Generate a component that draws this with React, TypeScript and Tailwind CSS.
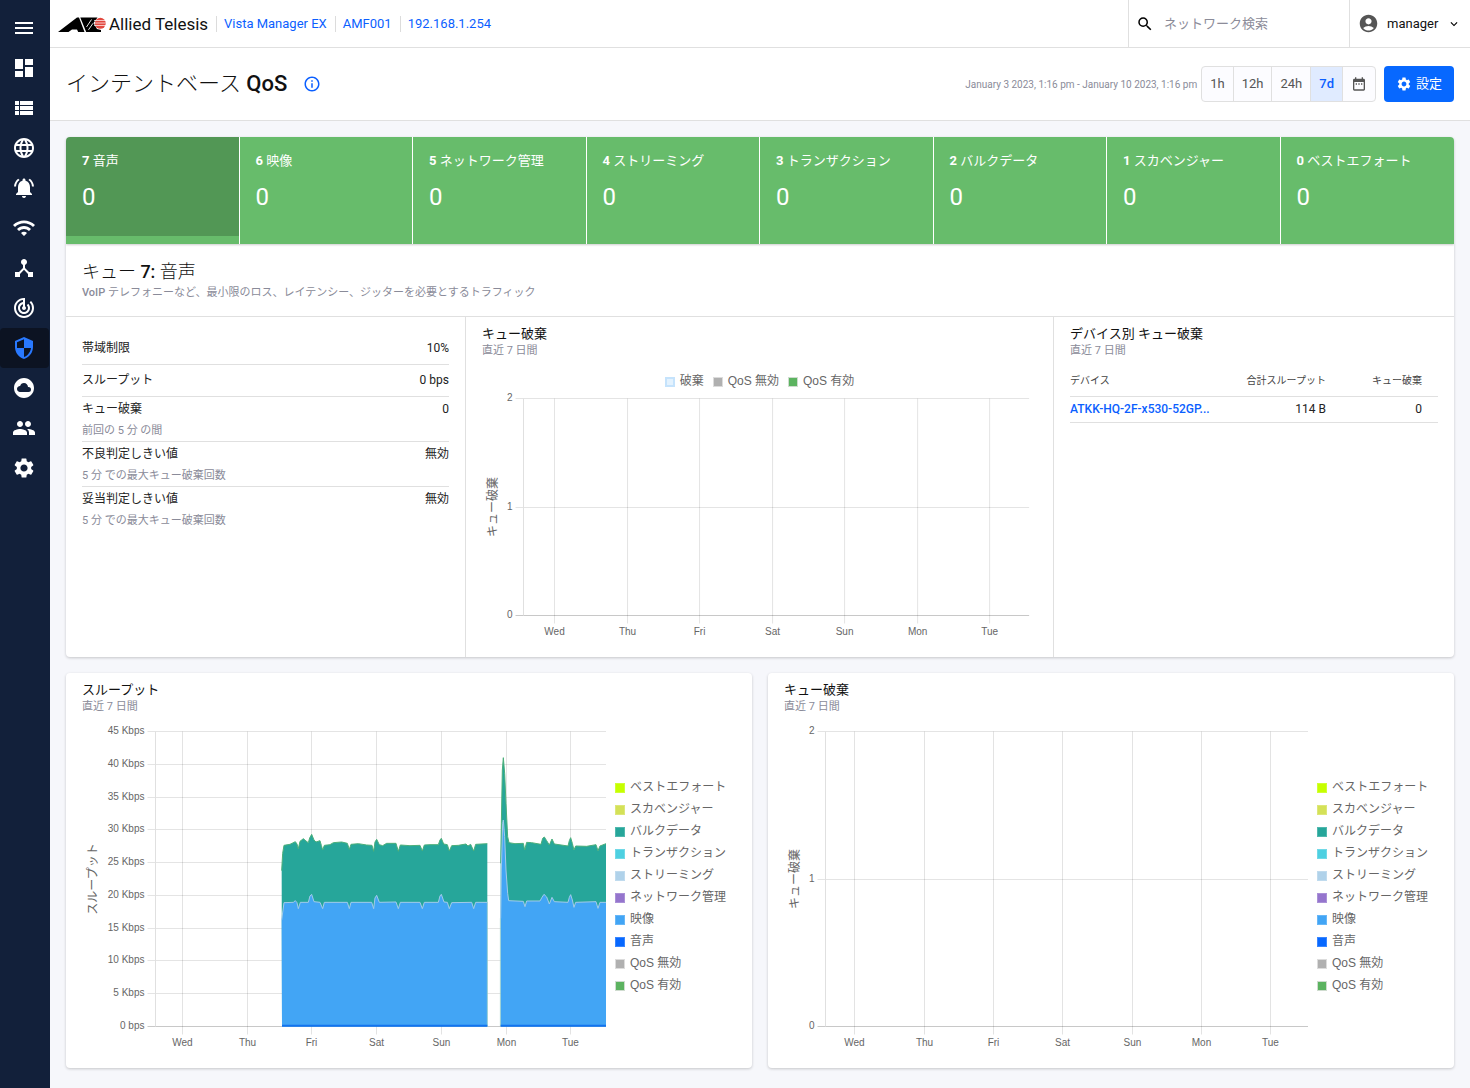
import React from "react";
import {
  MdAccountCircle,
  MdCloudCircle,
  MdDashboard,
  MdDateRange,
  MdDeviceHub,
  MdExpandMore,
  MdInfoOutline,
  MdLanguage,
  MdMenu,
  MdNotificationsActive,
  MdPeople,
  MdSearch,
  MdSecurity,
  MdSettings,
  MdTrackChanges,
  MdViewList,
  MdWifi,
} from "react-icons/md";

const NAV = [
  { icon: MdMenu, label: "メニュー" },
  { icon: MdDashboard, label: "ダッシュボード" },
  { icon: MdViewList, label: "資産管理" },
  { icon: MdLanguage, label: "ネットワークマップ" },
  { icon: MdNotificationsActive, label: "イベント" },
  { icon: MdWifi, label: "無線" },
  { icon: MdDeviceHub, label: "SD-WAN" },
  { icon: MdTrackChanges, label: "トラフィック" },
  { icon: MdSecurity, label: "サービス", active: true },
  { icon: MdCloudCircle, label: "クラウド" },
  { icon: MdPeople, label: "ユーザー管理" },
  { icon: MdSettings, label: "システム管理" },
];

const QUEUES = [
  "7 音声",
  "6 映像",
  "5 ネットワーク管理",
  "4 ストリーミング",
  "3 トランザクション",
  "2 バルクデータ",
  "1 スカベンジャー",
  "0 ベストエフォート",
];

const STATS = [
  { label: "帯域制限", value: "10%" },
  { label: "スループット", value: "0 bps" },
  { label: "キュー破棄", value: "0", note: "前回の 5 分 の間" },
  { label: "不良判定しきい値", value: "無効", note: "5 分 での最大キュー破棄回数" },
  { label: "妥当判定しきい値", value: "無効", note: "5 分 での最大キュー破棄回数" },
];

const LEGEND = [
  { label: "ベストエフォート", swatch: "bg-[#c6ff00] border-[#d0ff33]" },
  { label: "スカベンジャー", swatch: "bg-[#d4e157] border-[#dde779]" },
  { label: "バルクデータ", swatch: "bg-[#26a69a] border-[#51b8ae]" },
  { label: "トランザクション", swatch: "bg-[#4dd0e1] border-[#71d9e7]" },
  { label: "ストリーミング", swatch: "bg-[#b0d2ea] border-[#c0dbee]" },
  { label: "ネットワーク管理", swatch: "bg-[#9575cd] border-[#aa91d7]" },
  { label: "映像", swatch: "bg-[#42a5f5] border-[#68b7f7]" },
  { label: "音声", swatch: "bg-[#0768ff] border-[#3986ff]" },
  { label: "QoS 無効", swatch: "bg-[#b0b0b0] border-[#dcdcdc]" },
  { label: "QoS 有効", swatch: "bg-[#5cb360] border-[#cfdccf]" },
];

const DAYS = ["Wed", "Thu", "Fri", "Sat", "Sun", "Mon", "Tue"];

// Top edges of the stacked areas, three units to one chart unit
const BULK_A =
  "35,392 38,340 42,316 60,313 76,305 81,312 85,326 90,304 100,296 108,303 115,308 119,294 125,283 132,300 138,306 150,302 154,316 158,330 163,316 180,314 190,308 215,306 232,310 238,328 243,313 265,311 290,315 306,316 311,334 315,306 320,298 328,314 338,317 350,310 378,310 385,334 391,315 420,317 450,316 457,333 463,315 480,314 505,314 510,300 514,295 521,312 532,314 538,333 545,317 565,316 588,312 594,318 602,313 611,333 617,313 652,311";
const VIDEO_A =
  "35,540 42,488 70,487 76,482 81,488 85,506 91,487 115,487 120,468 125,463 132,485 150,487 158,506 163,487 232,487 238,506 243,487 305,487 311,506 315,474 320,466 328,487 378,486 385,506 391,487 450,487 457,506 463,487 505,487 510,468 514,463 522,486 532,487 538,506 545,488 605,487 611,506 617,487 652,487";
const BULK_B =
  "692,370 694,250 697,90 700,53 704,100 708,190 713,290 717,308 735,311 760,310 764,330 770,307 785,308 813,313 818,295 823,291 830,302 838,315 846,297 853,312 894,318 898,302 902,293 907,310 912,330 917,318 950,319 978,314 984,332 990,318 1008,311";
const VIDEO_B =
  "692,535 694,390 698,250 700,240 704,290 708,390 713,460 716,482 760,484 765,500 770,483 810,483 816,472 822,463 830,471 838,492 846,472 853,485 894,487 898,472 902,464 907,480 912,502 917,487 978,485 984,505 990,487 1008,487";

function Logo() {
  return (
    <a href="#" aria-label="Allied Telesis" className="flex items-center">
      <svg width="150" height="22" viewBox="0 0 150 22">
        <path d="M0 19 19 4.500h2L26.500 19h-6.300l-1.200-2.600h-5L10.500 19z" fill="#000" />
        <path d="M22.300 4.500H39.500L35.500 10l3.500 6 4 1v2H28.200z" fill="#000" />
        <path d="M33.500 6.500 28.500 14M30.500 16.800l4.500-6.500" stroke="#fff" strokeWidth="0.900" />
        <circle cx="42.300" cy="10.300" r="5.500" fill="#e2483f" />
        <path d="M36 7.500h13M36 10h13M36 12.500h13" stroke="#fff" strokeWidth="0.700" />
        <text x="51" y="17" fontSize="17" fontFamily="Roboto" fill="#111">
          Allied Telesis
        </text>
      </svg>
    </a>
  );
}

function CardTitle({ title, note }: { title: string; note: string }) {
  return (
    <>
      <h3 className="text-[13px] leading-[17px] text-[#111]">{title}</h3>
      <p className="text-[11px] leading-[17px] text-[#8a8b99]">{note}</p>
    </>
  );
}

type ChartProps = {
  width: number;
  height: number;
  left: number;
  right: number;
  top: number;
  bottom: number;
  firstDay: number;
  dayStep: number;
  yTicks: string[];
  yLabel: string;
  children?: React.ReactNode;
};

function Chart({ width, height, left, right, top, bottom, firstDay, dayStep, yTicks, yLabel, children }: ChartProps) {
  const middle = (top + bottom) / 2;
  const rowStep = (bottom - top) / (yTicks.length - 1);

  return (
    <svg
      viewBox={`0 0 ${width} ${height}`}
      className="block h-auto w-full"
      fontFamily="Liberation Sans, Noto Sans CJK JP, sans-serif"
      fill="#666"
      role="img"
      aria-label={yLabel}
    >
      {yTicks.map((tick, i) => {
        const y = Math.round(top + rowStep * i - 0.5) + 0.5;
        const last = i === yTicks.length - 1;
        return (
          <g key={tick}>
            <line x1={left - 8} x2={right} y1={y} y2={y} stroke={last ? "#c8c8c8" : "#e4e4e4"} />
            <text x={left - 11} y={y + 2.5} fontSize="10" textAnchor="end">
              {tick}
            </text>
          </g>
        );
      })}
      <line x1={left} x2={left} y1={top} y2={bottom} stroke="#e0e0e0" />
      {DAYS.map((day, i) => {
        const x = Math.floor(firstDay + dayStep * i) + 0.5;
        return (
          <g key={day}>
            <line x1={x} x2={x} y1={top} y2={bottom + 8} stroke="#000" strokeOpacity="0.11" />
            <text x={x} y={bottom + 19.5} fontSize="10" textAnchor="middle">
              {day}
            </text>
          </g>
        );
      })}
      <text
        x={11}
        y={middle}
        fontSize="12"
        textAnchor="middle"
        dominantBaseline="central"
        transform={`rotate(-90 11 ${middle})`}
      >
        {yLabel}
      </text>
      {children}
    </svg>
  );
}

function Area({ points, from, to, fill, stroke }: { points: string; from: number; to: number; fill: string; stroke: string }) {
  return (
    <>
      <polygon points={`${from},859 ${points} ${to},859`} fill={fill} />
      <polyline points={points} fill="none" stroke={stroke} strokeWidth="3" strokeLinejoin="round" />
    </>
  );
}

function SideLegend() {
  return (
    <ul className="w-[126px] shrink-0 self-center pl-[5px]">
      {LEGEND.map((item) => (
        <li
          key={item.label}
          className="flex h-[22px] items-center gap-[5px] font-['Liberation_Sans','Noto_Sans_CJK_JP',sans-serif] text-xs whitespace-nowrap text-[#666]"
        >
          <span className={`mt-[2px] size-[10px] shrink-0 border ${item.swatch}`} />
          {item.label}
        </li>
      ))}
    </ul>
  );
}

function Sidebar() {
  return (
    <nav className="flex w-[50px] shrink-0 flex-col bg-[#12203a] pt-2">
      {NAV.map(({ icon: Icon, label, active }) => (
        <a
          key={label}
          href="#"
          aria-label={label}
          className={`flex h-10 w-[49px] items-center justify-center rounded pr-px ${
            active ? "bg-[#0c1322] text-[#2979ff]" : "text-white"
          }`}
        >
          <Icon size={24} />
        </a>
      ))}
    </nav>
  );
}

function TopBar() {
  return (
    <header className="flex h-12 items-stretch border-b border-[#e0e0e0] bg-white text-[13px]">
      <div className="flex flex-1 items-center pl-2">
        <Logo />
        <a href="#" className="ml-2 border-l border-[#dcdcdc] pr-2 pl-[7px] leading-4 text-[#0b5fff]">
          Vista Manager EX
        </a>
        <a href="#" className="border-l border-[#dcdcdc] pr-2 pl-[7px] leading-4 text-[#0b5fff]">
          AMF001
        </a>
        <a href="#" className="border-l border-[#dcdcdc] pr-2 pl-[7px] leading-4 text-[#0b5fff]">
          192.168.1.254
        </a>
      </div>
      <label className="flex w-[221px] items-center gap-[10px] border-l border-[#e0e0e0] pl-[7px]">
        <MdSearch size={18} className="shrink-0 text-black" />
        <input
          type="search"
          aria-label="ネットワーク検索"
          placeholder="ネットワーク検索"
          className="w-full min-w-0 bg-transparent outline-none placeholder:text-[#8c8c99]"
        />
      </label>
      <button className="flex w-[121px] items-center border-l border-[#e0e0e0] pl-2">
        <MdAccountCircle size={21} className="text-[#555]" />
        <span className="ml-2 flex-1 text-left text-[#111]">manager</span>
        <MdExpandMore size={14} className="mr-[9px]" />
      </button>
    </header>
  );
}

function TitleBar() {
  return (
    <div className="flex h-[73px] items-center border-b border-[#e0e0e0] bg-white px-4">
      <h1 className="pb-[2px] text-[22px] font-light text-[#111]">
        インテントベース <span className="font-medium">QoS</span>
      </h1>
      <button aria-label="情報" className="ml-4 text-[#0b5fff]">
        <MdInfoOutline size={18} />
      </button>
      <span className="mr-1 ml-auto text-[10px] text-[#8a8b99]">January 3 2023, 1:16 pm - January 10 2023, 1:16 pm</span>
      <div className="flex h-9 divide-x divide-[#e0e0e0] overflow-hidden rounded border border-[#e0e0e0] bg-[#fcfcff] text-[13px] text-[#555]">
        <button className="px-2">1h</button>
        <button className="px-2">12h</button>
        <button className="px-2">24h</button>
        <button className="bg-[#e0ebff] px-2 font-medium text-[#0b5fff]">7d</button>
        <button className="px-2" aria-label="期間を選択">
          <MdDateRange size={16} />
        </button>
      </div>
      <button className="ml-2 flex h-9 items-center gap-1 rounded bg-[#0768ff] px-3 text-[13px] text-white">
        <MdSettings size={16} />
        設定
      </button>
    </div>
  );
}

function QueueCard() {
  return (
    <section className="overflow-hidden rounded bg-white shadow-[0_1px_3px_rgba(0,0,0,0.2)]">
      <div className="grid grid-cols-8 shadow-[0_1px_2px_rgba(0,0,0,0.2)]">
        {QUEUES.map((queue, i) => (
          <button
            key={queue}
            className={`flex h-[107px] flex-col items-start border-r border-white pt-[14px] pl-4 text-left text-white last:border-r-0 ${
              i === 0 ? "bg-[linear-gradient(#529755_99px,#67bc6b_99px)]" : "bg-[#67bc6b]"
            }`}
          >
            <span className="text-[13px] leading-5 font-bold">
              {queue.slice(0, 2)}
              <span className="font-normal">{queue.slice(2)}</span>
            </span>
            <span className="mt-[10px] text-2xl leading-8">0</span>
          </button>
        ))}
      </div>
      <div className="h-[73px] border-b border-[#e0e0e0] px-4 pt-4">
        <h2 className="text-lg leading-6 font-light text-[#111]">
          キュー <span className="font-medium">7:</span> 音声
        </h2>
        <p className="text-[11px] leading-[17px] text-[#8a8b99]">
          <span className="font-medium">VoIP</span>{" "}
          テレフォニーなど、最小限のロス、レイテンシー、ジッターを必要とするトラフィック
        </p>
      </div>
      <div className="grid min-h-[340px] grid-cols-[34fr_50fr_34fr]">
        <div className="border-r border-[#e0e0e0] p-4">
          {STATS.map((stat) => (
            <div
              key={stat.label}
              className={`flex justify-between border-b border-[#e0e0e0] text-xs text-[#222] last:border-b-0 ${
                stat.note ? "h-[45px] leading-6" : "h-8 items-center pb-[2px]"
              }`}
            >
              <div>
                {stat.label}
                {stat.note && <p className="text-[11px] leading-5 text-[#8a8b99]">{stat.note}</p>}
              </div>
              <span>{stat.value}</span>
            </div>
          ))}
        </div>
        <div className="border-r border-[#e0e0e0] px-4 pt-2">
          <CardTitle title="キュー破棄" note="直近 7 日間" />
          <ul className="flex h-8 items-center justify-center gap-[9px] pt-3 font-['Liberation_Sans','Noto_Sans_CJK_JP',sans-serif] text-xs text-[#666]">
            <li className="flex items-center gap-[5px]">
              <span className="mt-[2px] size-[10px] border-2 border-[#c5e3fc] bg-[#e3f2fe]" />
              破棄
            </li>
            <li className="flex items-center gap-[5px]">
              <span className="mt-[2px] size-[10px] border border-[#dcdcdc] bg-[#b0b0b0]" />
              QoS 無効
            </li>
            <li className="flex items-center gap-[5px]">
              <span className="mt-[2px] size-[10px] border border-[#cfdccf] bg-[#5cb360]" />
              QoS 有効
            </li>
          </ul>
          <Chart
            width={555}
            height={250}
            left={41.5}
            right={547}
            top={7.5}
            bottom={224.5}
            firstDay={72.5}
            dayStep={72.5}
            yTicks={["2", "1", "0"]}
            yLabel="キュー破棄"
          />
        </div>
        <div className="px-4 pt-2">
          <CardTitle title="デバイス別 キュー破棄" note="直近 7 日間" />
          <table className="mt-1 w-full table-fixed text-xs text-[#222]">
            <thead>
              <tr className="h-[33px] border-b border-[#e0e0e0] text-[10px] text-[#444]">
                <th className="pt-[2px] text-left font-normal">デバイス</th>
                <th className="w-[112px] pt-[2px] pr-4 text-right font-normal">合計スループット</th>
                <th className="w-24 pt-[2px] pr-4 text-right font-normal">キュー破棄</th>
              </tr>
            </thead>
            <tbody>
              <tr className="h-[26px] border-b border-[#e0e0e0]">
                <td className="font-medium whitespace-nowrap">
                  <a href="#" className="text-[#0b5fff]">
                    ATKK-HQ-2F-x530-52GP...
                  </a>
                </td>
                <td className="pr-4 text-right">114 B</td>
                <td className="pr-4 text-right">0</td>
              </tr>
            </tbody>
          </table>
        </div>
      </div>
    </section>
  );
}

export default function App() {
  return (
    <div className="flex min-h-screen bg-[#f6f7fb] font-[Roboto,'Noto_Sans_CJK_JP',sans-serif]" lang="ja">
      <Sidebar />
      <div className="flex min-w-0 flex-1 flex-col">
        <TopBar />
        <TitleBar />
        <main className="flex flex-col gap-4 p-4">
          <QueueCard />
          <div className="grid grid-cols-2 gap-4">
            <section className="rounded bg-white px-4 pt-2 pb-3 shadow-[0_1px_3px_rgba(0,0,0,0.2)]">
              <CardTitle title="スループット" note="直近 7 日間" />
              <div className="flex">
                <div className="min-w-0 flex-1">
                  <Chart
                    width={528}
                    height={341}
                    left={73.5}
                    right={524}
                    top={16.5}
                    bottom={311.5}
                    firstDay={100.25}
                    dayStep={64.75}
                    yTicks={[
                      "45 Kbps",
                      "40 Kbps",
                      "35 Kbps",
                      "30 Kbps",
                      "25 Kbps",
                      "20 Kbps",
                      "15 Kbps",
                      "10 Kbps",
                      "5 Kbps",
                      "0 bps",
                    ]}
                    yLabel="スループット"
                  >
                    <g transform="translate(188 25) scale(0.33333)">
                      <Area points={BULK_A} from={36} to={652} fill="#26a69a" stroke="#4caf79" />
                      <Area points={VIDEO_A} from={36} to={652} fill="#42a5f5" stroke="#a3cbe9" />
                      <Area points={BULK_B} from={692} to={1008} fill="#26a69a" stroke="#4caf79" />
                      <Area points={VIDEO_B} from={692} to={1008} fill="#42a5f5" stroke="#a3cbe9" />
                      <path d="M652 487v372M691 535v324" stroke="#a9d4cc" strokeWidth="2" />
                      <path d="M36 857H652M692 857h316" stroke="#1273f0" strokeWidth="6" />
                    </g>
                  </Chart>
                </div>
                <SideLegend />
              </div>
            </section>
            <section className="rounded bg-white px-4 pt-2 pb-3 shadow-[0_1px_3px_rgba(0,0,0,0.2)]">
              <CardTitle title="キュー破棄" note="直近 7 日間" />
              <div className="flex">
                <div className="min-w-0 flex-1">
                  <Chart
                    width={528}
                    height={341}
                    left={41.5}
                    right={524}
                    top={16.5}
                    bottom={311.5}
                    firstDay={70.7}
                    dayStep={69.33}
                    yTicks={["2", "1", "0"]}
                    yLabel="キュー破棄"
                  />
                </div>
                <SideLegend />
              </div>
            </section>
          </div>
        </main>
      </div>
    </div>
  );
}
